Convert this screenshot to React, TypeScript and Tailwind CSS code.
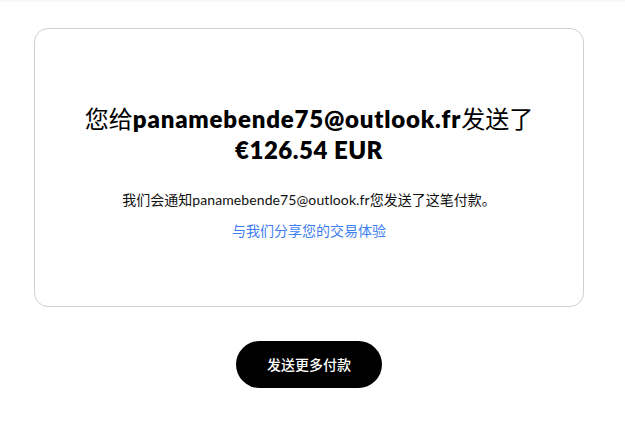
import React from "react";

export default function App() {
  return (
    <div className="min-h-[422px] w-full bg-white font-['Lato','Noto_Sans_CJK_SC',sans-serif]">
      <div className="h-[2px] w-full bg-[#f7f7f7]" />
      <div className="pl-[34px] pr-[41px] pt-[26px]">
        <div className="flex h-[279px] flex-col items-center rounded-[14px] border border-[#cfcfcf] pt-[73px]">
          <h1 className="text-center text-[24px] leading-[31px] text-black">
            <span className="font-['Noto_Sans_CJK_SC',sans-serif] font-normal">您给</span>
            <span className="font-extrabold tracking-[0.8px]">panamebende75@outlook.fr</span>
            <span className="font-['Noto_Sans_CJK_SC',sans-serif] font-normal">发送了</span>
            <br />
            <span className="font-extrabold tracking-[0.5px]">€126.54 EUR</span>
          </h1>
          <p className="mt-[24px] text-[14px] leading-[20px] text-[#111]">
            <span className="font-['Noto_Sans_CJK_SC',sans-serif]">我们会通知</span>
            <span className="tracking-[0.1px]">panamebende75@outlook.fr</span>
            <span className="font-['Noto_Sans_CJK_SC',sans-serif]">您发送了这笔付款。</span>
          </p>
          <a className="mt-[10px] font-['Noto_Sans_CJK_SC',sans-serif] text-[14px] leading-[20px] text-[#3d7ef2]">
            与我们分享您的交易体验
          </a>
        </div>
        <div className="mt-[34px] flex justify-center">
          <button className="h-[47px] w-[146px] rounded-full bg-black font-['Noto_Sans_CJK_SC',sans-serif] text-[14px] font-medium text-white">
            发送更多付款
          </button>
        </div>
      </div>
    </div>
  );
}
